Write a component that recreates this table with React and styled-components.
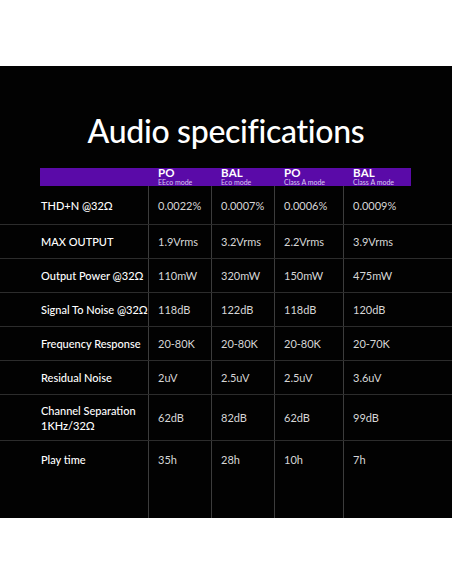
import React from 'react';
import styled, { createGlobalStyle } from 'styled-components';

const GlobalStyle = createGlobalStyle`
  body {
    margin: 0;
    background: #ffffff;
    font-family: 'Lato', 'Noto Sans', sans-serif;
  }
`;

const Page = styled.div`
  padding-top: 66px;
  height: 584px;
  box-sizing: border-box;
`;

const Panel = styled.section`
  height: 452px;
  background: #020202;
  display: flex;
  flex-direction: column;
  color: #ffffff;
`;

const Title = styled.h1`
  margin: 0;
  padding-top: 46px;
  height: 102px;
  box-sizing: border-box;
  font-family: 'Lato', sans-serif;
  font-weight: 500;
  font-size: 32px;
  line-height: 38px;
  text-align: center;
  letter-spacing: -0.3px;
`;

const Grid = styled.div`
  display: grid;
  grid-template-columns: 40px 109px 63px 63px 69px 67px 1fr;
`;

const HeadRow = styled(Grid)`
  height: 18px;
`;

const HeadSpacer = styled.div``;

const HeadBar = styled.div`
  grid-column: 2 / 7;
  display: grid;
  grid-template-columns: 109px 63px 63px 69px 67px;
  background: #5a0aa8;
`;

const HeadCell = styled.div`
  padding-left: 9px;
  display: flex;
  flex-direction: column;
  justify-content: center;
`;

const HeadName = styled.span`
  font-size: 11.5px;
  font-weight: 700;
  line-height: 10px;
  letter-spacing: 0.2px;
`;

const HeadMode = styled.span`
  font-size: 7px;
  line-height: 8px;
  color: #d9c9ee;
  white-space: nowrap;
`;

const Body = styled.div`
  flex: 1;
  display: flex;
  flex-direction: column;
`;

const Row = styled(Grid)`
  height: ${p => p.$h}px;
  flex: ${p => (p.$fill ? 1 : 'none')};
  border-bottom: ${p => (p.$fill ? 'none' : '1px solid #2c2c2c')};
  box-sizing: border-box;
`;

const Cell = styled.div`
  display: flex;
  align-items: ${p => (p.$top ? 'flex-start' : 'center')};
  padding-top: ${p => (p.$top ? '11px' : '0')};
  padding-left: ${p => (p.$data ? '9px' : '1px')};
  border-left: ${p => (p.$data ? '1px solid #3c3c3c' : 'none')};
  font-size: 11px;
  font-weight: ${p => (p.$data ? 400 : 500)};
  color: ${p => (p.$data ? '#d6d6d6' : '#ffffff')};
  line-height: 15px;
  white-space: nowrap;
  box-sizing: border-box;
  margin-left: ${p => (p.$data ? '-1px' : '0')};
`;

const heads = [
  ['PO', 'EEco mode'],
  ['BAL', 'Eco mode'],
  ['PO', 'Class A mode'],
  ['BAL', 'Class A mode'],
];

const rows = [
  { label: 'THD+N @32Ω', h: 39, values: ['0.0022%', '0.0007%', '0.0006%', '0.0009%'] },
  { label: 'MAX OUTPUT', h: 34, values: ['1.9Vrms', '3.2Vrms', '2.2Vrms', '3.9Vrms'] },
  { label: 'Output Power @32Ω', h: 34, values: ['110mW', '320mW', '150mW', '475mW'] },
  { label: 'Signal To Noise @32Ω', h: 34, values: ['118dB', '122dB', '118dB', '120dB'] },
  { label: 'Frequency Response', h: 34, values: ['20-80K', '20-80K', '20-80K', '20-70K'] },
  { label: 'Residual Noise', h: 34, values: ['2uV', '2.5uV', '2.5uV', '3.6uV'] },
  { label: <>Channel Separation<br />1KHz/32Ω</>, h: 46, values: ['62dB', '82dB', '62dB', '99dB'] },
  { label: 'Play time', h: 77, values: ['35h', '28h', '10h', '7h'], fill: true },
];

export default function App() {
  return (
    <Page>
      <GlobalStyle />
      <Panel>
        <Title>Audio specifications</Title>
        <HeadRow>
          <HeadSpacer />
          <HeadBar>
            <HeadCell />
            {heads.map(([name, mode], i) => (
              <HeadCell key={i}>
                <HeadName>{name}</HeadName>
                <HeadMode>{mode}</HeadMode>
              </HeadCell>
            ))}
          </HeadBar>
        </HeadRow>
        <Body>
          {rows.map((r, i) => (
            <Row key={i} $h={r.h} $fill={r.fill}>
              <div />
              <Cell $top={r.fill}>{r.label}</Cell>
              {r.values.map((v, j) => (
                <Cell key={j} $data $top={r.fill}>{v}</Cell>
              ))}
              <div />
            </Row>
          ))}
        </Body>
      </Panel>
    </Page>
  );
}
